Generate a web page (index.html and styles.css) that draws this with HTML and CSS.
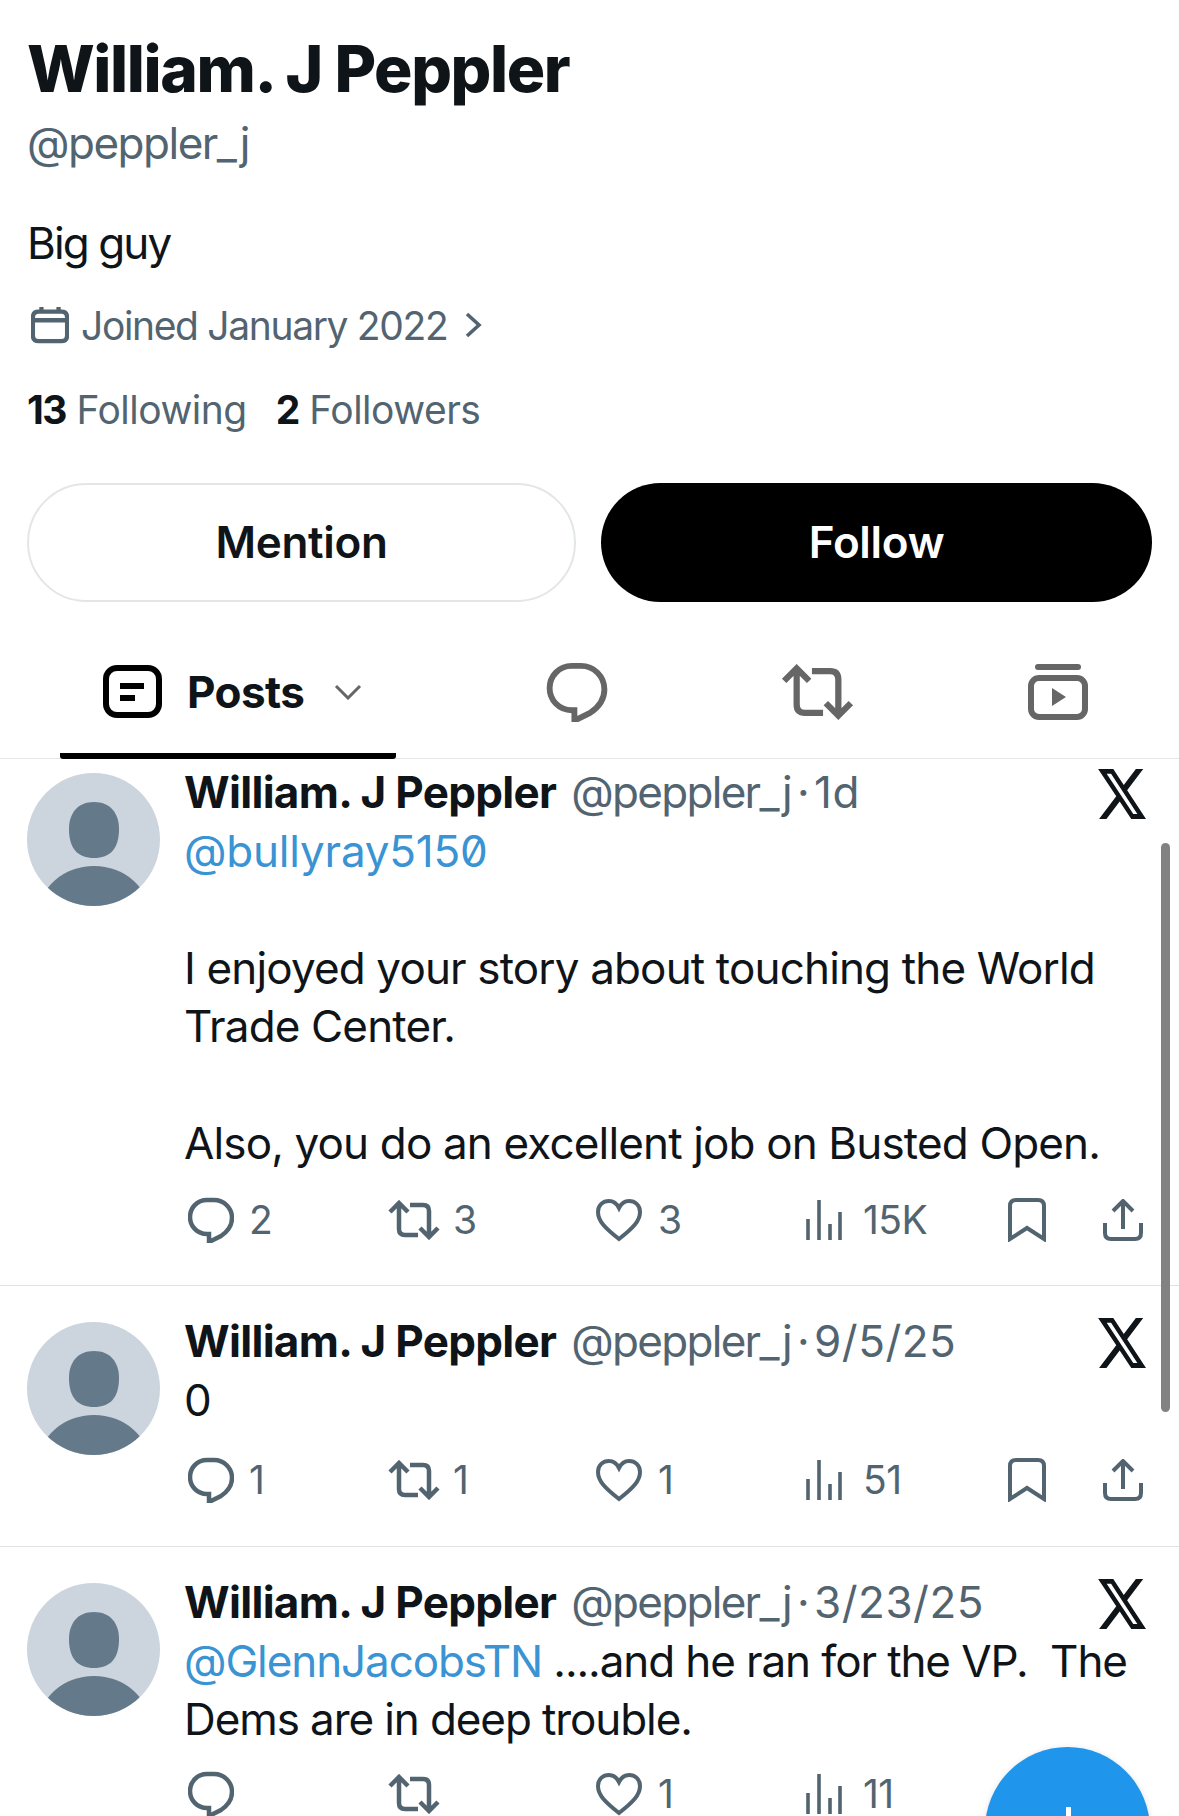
FILE: index.html
```html
<!DOCTYPE html>
<html lang="en">
<head>
    <meta charset="UTF-8">
    <title>William. J Peppler</title>
    <link rel="stylesheet" href="styles.css">
</head>
<body>

<svg class="sprite" width="0" height="0">
    <defs>
        <clipPath id="avatar_clip"><circle cx="66.5" cy="66.5" r="66.5"/></clipPath>
        <symbol id="i_avatar" viewBox="0 0 133 133">
            <circle cx="66.5" cy="66.5" r="66.5" fill="#ccd5dd"/>
            <g clip-path="url(#avatar_clip)" fill="#64798a">
                <path d="M67 29c16 0 25 11 25 27 0 20-9 29-25 29s-25-9-25-29c0-16 9-27 25-27z"/>
                <ellipse cx="67" cy="143" rx="56" ry="50"/>
            </g>
        </symbol>
        <symbol id="i_x" viewBox="1.2 2.25 21.6 19.5" preserveAspectRatio="none">
            <path d="M18.244 2.25h3.308l-7.227 8.26 8.502 11.24H16.17l-5.214-6.817L4.99 21.75H1.68l7.73-8.835L1.254 2.25H8.08l4.713 6.231zm-1.161 17.52h1.833L7.084 4.126H5.117z"/>
        </symbol>
        <symbol id="i_reply" viewBox="0 0 46 46">
            <path d="M19 3h7c10 0 18 8 18 18 0 8-5 14-11 18l-12 6v-8h-2C9 37 2 29 2 20S9 3 19 3z" fill="none" stroke="currentColor" stroke-width="4.5"/>
        </symbol>
        <symbol id="i_retweet" viewBox="0 0 54 40">
            <path d="M3 12 12 3l9 9M12 4v25c0 4 2 6 6 6h13M23 5h13c4 0 6 2 6 6v25M33 28l9 9 9-9" fill="none" stroke="currentColor" stroke-width="4.5"/>
        </symbol>
        <symbol id="i_heart" viewBox="0 0 48 44">
            <path d="M24 41C10 30 3 23 3 14 3 7 8 3 14 3c5 0 8 3 10 7 2-4 5-7 10-7 6 0 11 4 11 11 0 9-7 16-21 27z" fill="none" stroke="currentColor" stroke-width="4"/>
        </symbol>
        <symbol id="i_views" viewBox="0 0 38 40">
            <path d="M3 19v21M14 0v40M25 24v16M35 12v28" fill="none" stroke="currentColor" stroke-width="3.6"/>
        </symbol>
        <symbol id="i_bookmark" viewBox="0 0 38 44">
            <path d="M8 2h22c4 0 6 2 6 6v33L19 30 2 41V8c0-4 2-6 6-6z" fill="none" stroke="currentColor" stroke-width="4"/>
        </symbol>
        <symbol id="i_share" viewBox="0 0 40 42">
            <path d="M10 12 20 2l10 10M20 3v27M2 24v10c0 4 2 6 6 6h24c4 0 6-2 6-6V24" fill="none" stroke="currentColor" stroke-width="4"/>
        </symbol>
    </defs>
</svg>

<div class="page">
    <!-- profile head -->
    <div class="profile">
        <h1 class="profile_name">William. J Peppler</h1>
        <div class="profile_handle">@peppler_j</div>
        <div class="profile_bio">Big guy</div>
        <div class="profile_joined">
            <svg class="icon_cal" viewBox="0 0 40 38"><path d="M11 0v7M29 0v7M2 14h36M8 5h24c4 0 6 2 6 6v19c0 4-2 6-6 6H8c-4 0-6-2-6-6V11c0-4 2-6 6-6z" fill="none" stroke="currentColor" stroke-width="4.5"/></svg>
            <span>Joined January 2022</span>
            <svg class="icon_more" viewBox="0 0 18 26"><path d="M3 2l12 11L3 24" fill="none" stroke="currentColor" stroke-width="3.6"/></svg>
        </div>
        <div class="profile_stats">
            <span><b>13</b> Following</span>
            <span><b>2</b> Followers</span>
        </div>
        <div class="profile_btns">
            <div class="btn btn_line">Mention</div>
            <div class="btn btn_dark">Follow</div>
        </div>
    </div>

    <!-- tabs -->
    <div class="tabs">
        <div class="tab_posts">
            <svg class="icon_posts" viewBox="0 0 59 53"><rect x="3" y="3" width="53" height="47" rx="11" fill="none" stroke="#000" stroke-width="6"/><path d="M17 21h24M17 33h15" stroke="#000" stroke-width="6"/></svg>
            <span>Posts</span>
            <svg class="icon_down" viewBox="0 0 28 16"><path d="M2 2l12 12L26 2" fill="none" stroke="#666" stroke-width="3"/></svg>
        </div>
        <div class="tab_icon"><svg class="icon_t_reply"><use href="#i_reply"/></svg></div>
        <div class="tab_icon"><svg class="icon_t_rt"><use href="#i_retweet"/></svg></div>
        <div class="tab_icon">
            <svg class="icon_t_video" viewBox="0 0 60 56"><path d="M10 3h40" stroke="currentColor" stroke-width="6" stroke-linecap="round"/><rect x="3" y="14" width="54" height="39" rx="8" fill="none" stroke="currentColor" stroke-width="6"/><path d="M24 24l14 9-14 9z" fill="currentColor"/></svg>
        </div>
    </div>

    <!-- post 1 -->
    <div class="post post_first">
        <svg class="avatar"><use href="#i_avatar"/></svg>
        <div class="post_body">
            <div class="post_head">
                <b>William. J Peppler</b>
                <span class="post_meta">@peppler_j<i>·</i><em>1d</em></span>
                <svg class="icon_x"><use href="#i_x"/></svg>
            </div>
            <div class="post_text"><a class="mention mention_zero">@bullyray5150</a><br><br>I enjoyed your story about touching the World<br>Trade Center.<br><br>Also, you do an excellent job on Busted Open.</div>
            <div class="actions">
                <div class="act"><svg class="i_reply"><use href="#i_reply"/></svg><span>2</span></div>
                <div class="act"><svg class="i_rt"><use href="#i_retweet"/></svg><span>3</span></div>
                <div class="act"><svg class="i_heart"><use href="#i_heart"/></svg><span>3</span></div>
                <div class="act act_views"><svg class="i_views"><use href="#i_views"/></svg><span>15K</span></div>
                <div class="act"><svg class="i_mark"><use href="#i_bookmark"/></svg></div>
                <div class="act"><svg class="i_share"><use href="#i_share"/></svg></div>
            </div>
        </div>
    </div>

    <!-- post 2 -->
    <div class="post post_short">
        <svg class="avatar"><use href="#i_avatar"/></svg>
        <div class="post_body">
            <div class="post_head">
                <b>William. J Peppler</b>
                <span class="post_meta">@peppler_j<i>·</i><em>9/5/25</em></span>
                <svg class="icon_x"><use href="#i_x"/></svg>
            </div>
            <div class="post_text">0</div>
            <div class="actions">
                <div class="act"><svg class="i_reply"><use href="#i_reply"/></svg><span>1</span></div>
                <div class="act"><svg class="i_rt"><use href="#i_retweet"/></svg><span>1</span></div>
                <div class="act"><svg class="i_heart"><use href="#i_heart"/></svg><span>1</span></div>
                <div class="act act_views"><svg class="i_views"><use href="#i_views"/></svg><span>51</span></div>
                <div class="act"><svg class="i_mark"><use href="#i_bookmark"/></svg></div>
                <div class="act"><svg class="i_share"><use href="#i_share"/></svg></div>
            </div>
        </div>
    </div>

    <!-- post 3, runs off the bottom -->
    <div class="post post_last">
        <svg class="avatar"><use href="#i_avatar"/></svg>
        <div class="post_body">
            <div class="post_head">
                <b>William. J Peppler</b>
                <span class="post_meta">@peppler_j<i>·</i><em>3/23/25</em></span>
                <svg class="icon_x"><use href="#i_x"/></svg>
            </div>
            <div class="post_text post_text_tight"><a class="mention">@GlennJacobsTN</a> ....and he ran for the VP.&nbsp; The<br>Dems are in deep trouble.</div>
            <div class="actions">
                <div class="act"><svg class="i_reply"><use href="#i_reply"/></svg></div>
                <div class="act"><svg class="i_rt"><use href="#i_retweet"/></svg></div>
                <div class="act"><svg class="i_heart"><use href="#i_heart"/></svg><span>1</span></div>
                <div class="act act_views"><svg class="i_views"><use href="#i_views"/></svg><span>11</span></div>
            </div>
        </div>
    </div>

    <!-- things over the list -->
    <div class="scrollbar"></div>
    <div class="fab"><span class="fab_plus"></span></div>
</div>

</body>
</html>
```

FILE: styles.css
```css
* {
    box-sizing: border-box;
}
html, body {
    margin: 0;
    padding: 0;
    background: #fff;
}
body {
    font-family: Inter, "Noto Sans", sans-serif;
    color: #0f1419;
}
.sprite {
    position: absolute;
}
.page {
    position: relative;
    width: 1179px;
    height: 1816px;
    overflow: hidden;
}

/* profile head */
.profile {
    padding: 32px 27px 0 27px;
}
.profile_name {
    margin: 0;
    font-size: 64px;
    line-height: 74px;
    font-weight: 800;
    letter-spacing: -1.4px;
}
.profile_handle {
    margin-top: 12px;
    font-size: 44px;
    line-height: 50px;
    color: #536471;
    letter-spacing: -1.5px;
}
.profile_bio {
    margin-top: 50px;
    font-size: 44px;
    line-height: 50px;
    letter-spacing: -1.9px;
}
.profile_joined {
    display: flex;
    align-items: center;
    margin-top: 32px;
    height: 50px;
    font-size: 39px;
    color: #536471;
    letter-spacing: -1.35px;
}
.icon_cal {
    width: 38px;
    height: 38px;
    margin: 0 12px 0 4px;
}
.icon_more {
    width: 18px;
    height: 26px;
    margin-left: 17px;
}
.profile_stats {
    display: flex;
    gap: 29px;
    margin-top: 35px;
    font-size: 39px;
    line-height: 50px;
    color: #536471;
    letter-spacing: -0.5px;
}
.profile_stats b {
    color: #0f1419;
    font-weight: 700;
    letter-spacing: -1.5px;
}
.profile_btns {
    display: grid;
    grid-template-columns: 549px 1fr;
    gap: 25px;
    margin-top: 48px;
}
.btn {
    height: 119px;
    border-radius: 60px;
    font-size: 44px;
    font-weight: 600;
    line-height: 119px;
    text-align: center;
    letter-spacing: -0.3px;
}
.btn_line {
    border: 2px solid #e3e6e8;
    line-height: 115px;
}
.btn_dark {
    background: #000;
    color: #fff;
}

/* tabs */
.tabs {
    display: flex;
    margin-top: 30px;
    height: 127px;
    padding-left: 60px;
    border-bottom: 1px solid #e4e6e8;
    color: #666;
}
.tab_posts {
    display: flex;
    align-items: center;
    width: 336px;
    margin-right: 61px;
    padding: 0 0 2px 43px;
    border-bottom: 6px solid #000;
    margin-bottom: -1px;
    border-radius: 0 0 3px 3px;
    color: #0f1419;
    font-size: 44px;
    font-weight: 700;
    letter-spacing: -0.6px;
}
.icon_posts {
    width: 59px;
    height: 53px;
    margin-right: 25px;
}
.icon_down {
    width: 28px;
    height: 16px;
    margin-left: 30px;
}
.tab_icon {
    display: flex;
    align-items: center;
    justify-content: center;
    width: 240px;
    padding-bottom: 6px;
}
.icon_t_reply {
    width: 62px;
    height: 60px;
}
.icon_t_rt {
    width: 75px;
    height: 56px;
}
.icon_t_video {
    width: 60px;
    height: 56px;
    margin-left: 2px;
}

/* posts */
.post {
    display: flex;
    padding: 26px 33px 0 27px;
    height: 261px;
    border-bottom: 1px solid #dfe2e4;
}
.post_first {
    padding-top: 4px;
    height: 527px;
}
.post_last {
    height: auto;
    border-bottom: 0;
}
.avatar {
    flex: none;
    width: 133px;
    height: 133px;
    margin: 10px 24px 0 0;
}
.post_body {
    flex: 1;
    min-width: 0;
}
.post_head {
    display: flex;
    align-items: center;
    height: 58.5px;
    font-size: 44px;
    letter-spacing: -0.7px;
    white-space: nowrap;
}
.post_head b {
    font-weight: 700;
    margin-right: 15px;
}
.post_meta {
    color: #536471;
    letter-spacing: -1.7px;
}
.post_meta i {
    font-style: normal;
    margin: 0 6px;
}
.post_meta em {
    font-style: normal;
    letter-spacing: 0.5px;
}
.icon_x {
    width: 48px;
    height: 50px;
    margin: 4px 0 0 auto;
    fill: #0f1419;
}
.post_text {
    font-size: 44px;
    line-height: 58.5px;
    letter-spacing: -0.85px;
    white-space: nowrap;
}
.post_text_tight {
    letter-spacing: -1.1px;
}
.mention {
    color: #3a93d3;
}
.mention_zero {
    font-feature-settings: "zero";
    letter-spacing: -0.2px;
}
.actions {
    display: grid;
    grid-template-columns: 203px 208px 210px 203px 95px 40px;
    align-items: center;
    height: 64px;
    margin-top: 15px;
    color: #536471;
    font-size: 39px;
}
.post_short .actions {
    margin-top: 19px;
}
.post_last .actions {
    margin-top: 13px;
}
.act {
    display: flex;
    align-items: center;
    gap: 15px;
    line-height: 36px;
    letter-spacing: -0.5px;
}
.act svg {
    flex: none;
}
.i_reply {
    width: 46px;
    height: 46px;
    margin-left: 4px;
}
.i_rt {
    width: 54px;
    height: 40px;
    margin-right: -3px;
}
.i_heart {
    width: 48px;
    height: 44px;
}
.i_views {
    width: 38px;
    height: 40px;
    margin-right: 5px;
}
.i_mark {
    width: 38px;
    height: 44px;
}
.i_share {
    width: 40px;
    height: 42px;
}

/* over the list */
.scrollbar {
    position: absolute;
    left: 1161px;
    top: 843px;
    width: 9px;
    height: 569px;
    border-radius: 5px;
    background: #828282;
}
.fab {
    position: absolute;
    left: 985px;
    top: 1747px;
    width: 165px;
    height: 165px;
    border-radius: 50%;
    background: #1f96eb;
    box-shadow: 0 1px 6px rgba(0, 0, 0, 0.12);
}
.fab_plus {
    position: absolute;
    left: 81px;
    top: 60px;
    width: 5px;
    height: 40px;
    background: #fff;
}
```
